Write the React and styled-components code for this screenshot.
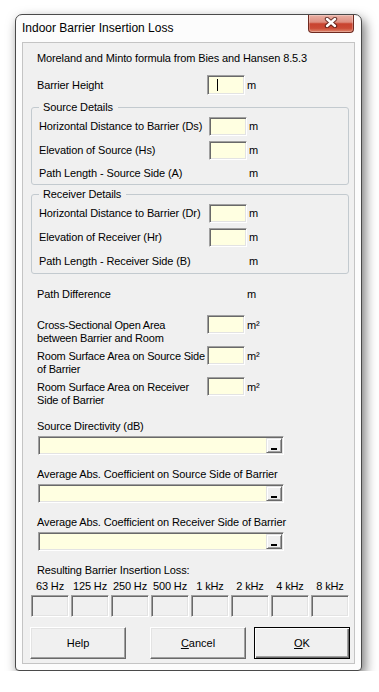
import React from 'react';
import styled, { createGlobalStyle, css } from 'styled-components';

const GlobalStyle = createGlobalStyle`
  html, body {
    margin: 0;
    padding: 0;
    background: #ffffff;
  }
  body {
    font-family: "Liberation Sans", Arial, sans-serif;
    font-size: 11px;
    color: #000;
  }
`;

const Page = styled.div`
  padding: 14px 0 0 15px;
`;

const Window = styled.div`
  box-sizing: border-box;
  width: 347px;
  height: 657px;
  display: flex;
  flex-direction: column;
  padding: 0 6px 6px;
  background: #fcfcfc;
  border: 1px solid #4a4a4a;
  border-radius: 7px 7px 4px 4px;
  box-shadow: 3px 5px 12px rgba(0, 0, 0, 0.55);
`;

const TitleBar = styled.div`
  flex: none;
  height: 27px;
  display: flex;
  align-items: flex-start;
  justify-content: space-between;
`;

const Title = styled.div`
  font-size: 12px;
  line-height: 27px;
`;

const CloseButton = styled.div`
  box-sizing: border-box;
  width: 46px;
  height: 18px;
  margin-right: 1px;
  display: flex;
  align-items: center;
  justify-content: center;
  padding-bottom: 2px;
  border: 1px solid #6e2a20;
  border-top: none;
  border-radius: 0 0 4px 4px;
  background: linear-gradient(#eab1a5 0%, #de8e80 42%, #c8432f 52%, #cb4b36 78%, #e08a70 100%);
  box-shadow: inset 0 0 0 1px rgba(255, 255, 255, 0.25);
`;

const Client = styled.div`
  flex: 1;
  display: flex;
  flex-direction: column;
  background: #f0f0f0;
  border: 1px solid #c4c4c4;
  padding: 0 5px 0 8px;
  letter-spacing: -0.12px;
`;

const Line = styled.div`
  height: 14px;
  line-height: 14px;
  padding-left: 6px;
  margin-top: ${p => p.$gap ?? 0}px;
  white-space: nowrap;
`;

const Row = styled.div`
  display: flex;
  align-items: center;
  height: ${p => p.$h ?? 24}px;
  margin-top: ${p => p.$gap ?? 0}px;
  padding-left: ${p => p.$indent ?? 0}px;
`;

const Label = styled.span`
  flex: none;
  width: 170px;
  line-height: 14px;
  white-space: nowrap;
`;

const Field = styled.div`
  box-sizing: border-box;
  flex: none;
  width: ${p => p.$w ?? 38}px;
  height: ${p => p.$h ?? 19}px;
  display: flex;
  align-items: center;
  background: ${p => (p.$readonly ? '#f0f0f0' : '#ffffe1')};
  border: 1px solid;
  border-color: #a0a0a0 #ffffff #ffffff #a0a0a0;
  box-shadow: inset 1px 1px #696969, inset -1px -1px #e3e3e3;
`;

const Caret = styled.span`
  width: 1px;
  height: 12px;
  margin-left: 9px;
  background: #000;
`;

const Output = styled.span`
  flex: none;
  width: 38px;
`;

const Unit = styled.span`
  margin-left: 2px;
  line-height: 14px;
`;

const Group = styled.fieldset`
  margin: ${p => p.$gap ?? 0}px 0 0;
  padding: 0 0 0 7px;
  min-width: 0;
  border: 1px solid #c3cacf;
  border-radius: 3px;
`;

const Legend = styled.legend`
  padding: 0 5px 0 4px;
  line-height: 14px;
  white-space: nowrap;
`;

const TallRow = styled.div`
  display: flex;
  align-items: flex-start;
  height: 31px;
  margin-top: ${p => p.$gap ?? 0}px;
  padding-left: 6px;
`;

const WrapLabel = styled.span`
  flex: none;
  width: 170px;
  padding-top: 4px;
  line-height: 13px;
  letter-spacing: -0.2px;
  white-space: nowrap;
`;

const FieldUnit = styled.div`
  display: flex;
  align-items: center;
`;

const Combo = styled.div`
  box-sizing: border-box;
  width: 246px;
  height: 19px;
  margin: 3px 0 0 7px;
  padding: 1px;
  display: flex;
  justify-content: flex-end;
  background: #ffffe1;
  border: 1px solid;
  border-color: #a0a0a0 #ffffff #ffffff #a0a0a0;
  box-shadow: inset 1px 1px #696969, inset -1px -1px #e3e3e3;
`;

const ComboButton = styled.div`
  box-sizing: border-box;
  width: 16px;
  height: 15px;
  display: flex;
  flex-direction: column;
  align-items: center;
  justify-content: flex-end;
  padding-bottom: 2px;
  background: #f0f0f0;
  border: 1px solid;
  border-color: #e3e3e3 #696969 #696969 #e3e3e3;
  box-shadow: inset 1px 1px #ffffff, inset -1px -1px #a0a0a0;
`;

const Dash = styled.span`
  width: 6px;
  height: 2px;
  background: #000;
`;

const FreqGrid = styled.div`
  display: grid;
  grid-template-columns: repeat(8, 38px);
  column-gap: 2px;
  margin-top: 2px;
`;

const FreqLabel = styled.span`
  text-align: center;
  line-height: 14px;
  white-space: nowrap;
`;

const ButtonRow = styled.div`
  display: flex;
  margin: 10px -1px 0;
`;

const Button = styled.button`
  box-sizing: border-box;
  width: 96px;
  height: 32px;
  margin: 0 0 0 ${p => p.$gap ?? 0}px;
  padding: 0;
  font-family: "Liberation Sans", Arial, sans-serif;
  font-size: 11px;
  color: #000;
  background: #f0f0f0;
  border: 1px solid;
  border-color: #ffffff #696969 #696969 #ffffff;
  box-shadow: inset -1px -1px #a0a0a0, inset 1px 1px #e3e3e3;
  ${p =>
    p.$default &&
    css`
      border: 1px solid #000;
      box-shadow: inset 1px 1px #ffffff, inset -1px -1px #696969, inset -2px -2px #a0a0a0;
    `}
`;

const freqs = ['63 Hz', '125 Hz', '250 Hz', '500 Hz', '1 kHz', '2 kHz', '4 kHz', '8 kHz'];

const ComboBox = () => (
  <Combo>
    <ComboButton>
      <Dash />
    </ComboButton>
  </Combo>
);

export default function App() {
  return (
    <Page>
      <GlobalStyle />
      <Window>
        <TitleBar>
          <Title>Indoor Barrier Insertion Loss</Title>
          <CloseButton>
            <svg width="14" height="11" viewBox="0 0 14 11">
              <path d="M3 2 L11 9 M11 2 L3 9" stroke="rgba(70,20,15,0.75)" strokeWidth="4.4" strokeLinecap="round" />
              <path d="M3 2 L11 9 M11 2 L3 9" stroke="#ffffff" strokeWidth="2.4" strokeLinecap="round" />
            </svg>
          </CloseButton>
        </TitleBar>

        <Client>
          <Line $gap={8}>Moreland and Minto formula from Bies and Hansen 8.5.3</Line>

          <Row $gap={10} $h={20} $indent={6}>
            <Label>Barrier Height</Label>
            <Field $h={20}>
              <Caret />
            </Field>
            <Unit>m</Unit>
          </Row>

          <Group $gap={5}>
            <Legend>Source Details</Legend>
            <Row>
              <Label>Horizontal Distance to Barrier (Ds)</Label>
              <Field />
              <Unit>m</Unit>
            </Row>
            <Row>
              <Label>Elevation of Source (Hs)</Label>
              <Field />
              <Unit>m</Unit>
            </Row>
            <Row $h={22}>
              <Label>Path Length - Source Side (A)</Label>
              <Output />
              <Unit>m</Unit>
            </Row>
          </Group>

          <Group $gap={2}>
            <Legend>Receiver Details</Legend>
            <Row>
              <Label>Horizontal Distance to Barrier (Dr)</Label>
              <Field />
              <Unit>m</Unit>
            </Row>
            <Row>
              <Label>Elevation of Receiver (Hr)</Label>
              <Field />
              <Unit>m</Unit>
            </Row>
            <Row>
              <Label>Path Length - Receiver Side (B)</Label>
              <Output />
              <Unit>m</Unit>
            </Row>
          </Group>

          <Row $gap={13} $h={14} $indent={6}>
            <Label>Path Difference</Label>
            <Output />
            <Unit>m</Unit>
          </Row>

          <TallRow $gap={14}>
            <WrapLabel>
              Cross-Sectional Open Area
              <br />
              between Barrier and Room
            </WrapLabel>
            <FieldUnit>
              <Field />
              <Unit>m²</Unit>
            </FieldUnit>
          </TallRow>
          <TallRow>
            <WrapLabel>
              Room Surface Area on Source Side
              <br />
              of Barrier
            </WrapLabel>
            <FieldUnit>
              <Field />
              <Unit>m²</Unit>
            </FieldUnit>
          </TallRow>
          <TallRow>
            <WrapLabel>
              Room Surface Area on Receiver
              <br />
              Side of Barrier
            </WrapLabel>
            <FieldUnit>
              <Field />
              <Unit>m²</Unit>
            </FieldUnit>
          </TallRow>

          <Line $gap={11}>Source Directivity (dB)</Line>
          <ComboBox />
          <Line $gap={12}>Average Abs. Coefficient on Source Side of Barrier</Line>
          <ComboBox />
          <Line $gap={12}>Average Abs. Coefficient on Receiver Side of Barrier</Line>
          <ComboBox />

          <Line $gap={12}>Resulting Barrier Insertion Loss:</Line>
          <FreqGrid>
            {freqs.map(f => (
              <FreqLabel key={f}>{f}</FreqLabel>
            ))}
          </FreqGrid>
          <FreqGrid>
            {freqs.map(f => (
              <Field key={f} $readonly $h={22} />
            ))}
          </FreqGrid>

          <ButtonRow>
            <Button>Help</Button>
            <Button $gap={24}>
              <u>C</u>ancel
            </Button>
            <Button $gap={8} $default>
              <u>O</u>K
            </Button>
          </ButtonRow>
        </Client>
      </Window>
    </Page>
  );
}
